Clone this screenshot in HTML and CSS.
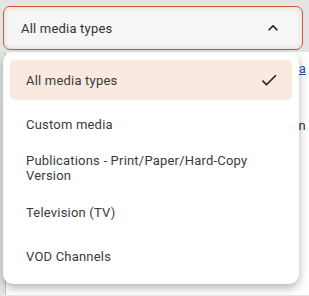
FILE: index.html
```html
<!DOCTYPE html>
<html lang="en">
<head>
    <meta charset="UTF-8">
    <meta name="viewport" content="width=device-width, initial-scale=1.0">
    <title>Media type filter</title>
    <link rel="stylesheet" href="styles.css">
</head>
<body>
    <div class="filter">
        <button class="select" type="button">
            <span class="select-label">All media types</span>
            <svg class="chevron" viewBox="0 0 24 24" width="20" height="20"><path d="M12 8l-6 6 1.41 1.41L12 10.83l4.59 4.58L18 14z"/></svg>
        </button>

        <!-- Page content behind the open menu -->
        <div class="panel">
            <p class="panel-line"><a href="#">View media</a></p>
            <p class="panel-line">Custom selection plan</p>
        </div>

        <ul class="menu">
            <li class="option selected">
                <span>All media types</span>
                <svg class="check" viewBox="0 0 24 24" width="20" height="20"><path d="M9 16.17L4.83 12l-1.42 1.41L9 19 21 7l-1.41-1.41z"/></svg>
            </li>
            <li class="option"><span>Custom media</span></li>
            <li class="option"><span>Publications - Print/Paper/Hard-Copy Version</span></li>
            <li class="option"><span>Television (TV)</span></li>
            <li class="option"><span>VOD Channels</span></li>
        </ul>
    </div>
</body>
</html>
```

FILE: styles.css
```css
body {
    margin: 0;
    background-color: #e4e4e4;
    font-family: Roboto, 'Noto Sans', sans-serif;
    color: #333;
    letter-spacing: 0.2px;
}
.filter {
    position: relative;
    padding: 6px 0 0 3px;
}
.select {
    display: flex;
    align-items: center;
    justify-content: space-between;
    width: 300px;
    height: 44px;
    padding: 0 19px 0 17px;
    box-sizing: border-box;
    background: #f6f6f6;
    border: 1.5px solid #d4552e;
    border-radius: 7px;
    box-shadow: inset 0 0 6px rgba(0, 0, 0, 0.12);
    font-family: inherit;
    font-size: 13px;
    letter-spacing: inherit;
    color: #333;
    cursor: pointer;
}
.chevron {
    fill: #222;
}
.panel {
    margin: 2px 0 0 2px;
    height: 234px;
    background: #fff;
    border-left: 1px solid #c4c4c4;
    padding: 9px 3px 0 0;
    overflow: hidden;
    font-size: 13px;
    line-height: 16px;
    text-align: right;
}
.panel-line {
    margin: 0 0 41px;
    white-space: nowrap;
}
.panel-line a {
    color: #1a55b8;
}
.menu {
    position: absolute;
    top: 52px;
    left: 3px;
    width: 296px;
    margin: 0;
    padding: 8px 7px;
    box-sizing: border-box;
    list-style: none;
    background: #fff;
    border-radius: 10px;
    box-shadow: 0 4px 10px rgba(0, 0, 0, 0.3);
    display: flex;
    flex-direction: column;
    gap: 4px;
}
.option {
    display: flex;
    align-items: center;
    justify-content: space-between;
    min-height: 40px;
    padding: 5px 13px 5px 16px;
    box-sizing: border-box;
    border-radius: 5px;
    font-size: 13px;
    line-height: 15px;
    color: #3a3a3a;
}
.option.selected {
    background: #fae9e1;
}
.check {
    fill: #222;
    flex-shrink: 0;
}
```
